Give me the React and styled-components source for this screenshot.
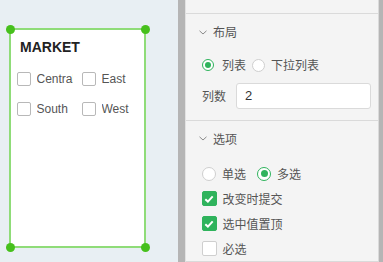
import React from "react";
import styled, { createGlobalStyle } from "styled-components";

const GlobalStyle = createGlobalStyle`
  html, body {
    margin: 0;
    padding: 0;
    background: #e8eff3;
  }
  * {
    box-sizing: border-box;
  }
`;

const Page = styled.div`
  display: flex;
  width: 383px;
  height: 262px;
  overflow: hidden;
  font-family: "Liberation Sans", "Noto Sans CJK SC", sans-serif;
`;

/* ---------- canvas ---------- */

const Canvas = styled.div`
  width: 178px;
  flex: none;
  background: #e8eff3;
  padding: 28px 0 0 9px;
`;

const Widget = styled.div`
  position: relative;
  width: 137px;
  height: 220px;
  background: #fff;
  border: 2px solid #8fdc78;
  padding: 9px 6px;
`;

const Handle = styled.span`
  position: absolute;
  width: 9px;
  height: 9px;
  border-radius: 50%;
  background: #46c01c;
  left: ${(p) => (p.right ? "auto" : "-5.5px")};
  right: ${(p) => (p.right ? "-5.5px" : "auto")};
  top: ${(p) => (p.bottom ? "auto" : "-5.5px")};
  bottom: ${(p) => (p.bottom ? "-5.5px" : "auto")};
`;

const Title = styled.div`
  font-size: 14px;
  line-height: 16px;
  font-weight: bold;
  color: #222;
  margin-left: 3px;
`;

const OptionGrid = styled.div`
  display: grid;
  grid-template-columns: 65px 65px;
  row-gap: 10px;
  margin-top: 14px;
`;

const Option = styled.div`
  display: flex;
  align-items: center;
  height: 20px;
`;

const Box = styled.span`
  width: 13.5px;
  height: 13.5px;
  flex: none;
  border: 1px solid #b8b8b8;
  border-radius: 2px;
  background: #fff;
`;

const OptionLabel = styled.span`
  margin-left: 6px;
  font-size: 12px;
  color: #555;
  white-space: nowrap;
  overflow: hidden;
  max-width: 36.3px;
`;

/* ---------- panel ---------- */

const Bar = styled.div`
  width: ${(p) => p.w}px;
  flex: none;
  background: #b5b5b5;
`;

const Panel = styled.div`
  flex: 1;
  background: #f4f4f4;
  border-left: 1px solid #e2e2e2;
  border-right: 1px solid #dadada;
  font-family: "Noto Sans CJK SC", "Liberation Sans", sans-serif;
  font-size: 12px;
  color: #555;
`;

const TopSpace = styled.div`
  height: 14px;
  border-bottom: 1px solid #dadada;
`;

const Section = styled.div`
  border-bottom: 1px solid #dadada;
  padding-bottom: ${(p) => p.pb || 0}px;
`;

const Header = styled.div`
  display: flex;
  align-items: center;
  height: 36px;
  padding-left: 13px;
  line-height: 16px;
  color: #555;
`;

const Chevron = () => (
  <svg width="8" height="5" viewBox="0 0 8 5" style={{ marginRight: 6 }}>
    <path d="M0.5 0.8 L4 4 L7.5 0.8" fill="none" stroke="#8a8a8a" strokeWidth="1" />
  </svg>
);

const Body = styled.div`
  padding: ${(p) => p.pt || 0}px 7px 0 16px;
`;

const Row = styled.div`
  display: flex;
  align-items: center;
  height: ${(p) => p.h || 25}px;
  margin-bottom: ${(p) => p.mb || 0}px;
  line-height: 16px;
`;

const Radio = styled.span`
  width: ${(p) => p.size}px;
  height: ${(p) => p.size}px;
  flex: none;
  border-radius: 50%;
  border: 1px solid ${(p) => (p.checked ? "#2fb35c" : "#cfcfcf")};
  background: #fff;
  display: flex;
  align-items: center;
  justify-content: center;
  margin-right: ${(p) => p.gap}px;

  &::after {
    content: "";
    display: ${(p) => (p.checked ? "block" : "none")};
    width: ${(p) => Math.round(p.size / 2)}px;
    height: ${(p) => Math.round(p.size / 2)}px;
    border-radius: 50%;
    background: #2fb35c;
  }
`;

const ItemText = styled.span`
  margin-right: ${(p) => p.mr || 0}px;
  white-space: nowrap;
`;

const Check = styled.span`
  width: 14.5px;
  height: 14.5px;
  flex: none;
  border-radius: 2px;
  border: 1px solid ${(p) => (p.checked ? "#2fb35c" : "#cfcfcf")};
  background: ${(p) => (p.checked ? "#2fb35c" : "#fff")};
  display: flex;
  align-items: center;
  justify-content: center;
  margin-right: 6px;
`;

const Tick = () => (
  <svg width="10" height="8" viewBox="0 0 10 8">
    <path d="M1.3 4.2 L3.9 6.6 L8.7 1.4" fill="none" stroke="#fff" strokeWidth="2" />
  </svg>
);

const FieldLabel = styled.span`
  width: 34px;
  flex: none;
`;

const Input = styled.div`
  flex: 1;
  height: 25.5px;
  background: #fff;
  border: 1px solid #dadada;
  border-radius: 3px;
  padding-left: 8px;
  display: flex;
  align-items: center;
  font-family: "Liberation Sans", sans-serif;
  font-size: 13px;
  color: #333;
`;

export default function App() {
  const options = ["Central", "East", "South", "West"];
  const checks = [
    { label: "改变时提交", checked: true },
    { label: "选中值置顶", checked: true },
    { label: "必选", checked: false },
  ];

  return (
    <>
      <GlobalStyle />
      <Page>
        <Canvas>
          <Widget>
            <Handle />
            <Handle right />
            <Handle bottom />
            <Handle right bottom />
            <Title>MARKET</Title>
            <OptionGrid>
              {options.map((o) => (
                <Option key={o}>
                  <Box />
                  <OptionLabel>{o}</OptionLabel>
                </Option>
              ))}
            </OptionGrid>
          </Widget>
        </Canvas>

        <Bar w={7} />

        <Panel>
          <TopSpace />

          <Section pb={11}>
            <Header>
              <Chevron />
              布局
            </Header>
            <Body pt={3}>
              <Row h={24} mb={6}>
                <Radio size={12} gap={8} checked />
                <ItemText mr={6}>列表</ItemText>
                <Radio size={13} gap={6} />
                <ItemText>下拉列表</ItemText>
              </Row>
              <Row h={25.5}>
                <FieldLabel>列数</FieldLabel>
                <Input>2</Input>
              </Row>
            </Body>
          </Section>

          <Section>
            <Header>
              <Chevron />
              选项
            </Header>
            <Body pt={4.5}>
              <Row>
                <Radio size={14} gap={6} />
                <ItemText mr={11}>单选</ItemText>
                <Radio size={14} gap={6} checked />
                <ItemText>多选</ItemText>
              </Row>
              {checks.map((c) => (
                <Row key={c.label}>
                  <Check checked={c.checked}>{c.checked && <Tick />}</Check>
                  <ItemText>{c.label}</ItemText>
                </Row>
              ))}
            </Body>
          </Section>
        </Panel>

        <Bar w={4} />
      </Page>
    </>
  );
}
